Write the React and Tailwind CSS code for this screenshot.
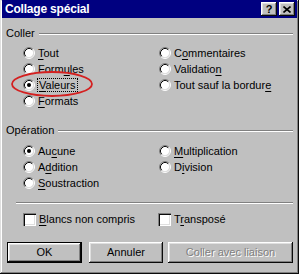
import React from 'react';

const font = { fontFamily: '"Liberation Sans", Arial, sans-serif' };

function Radio({ checked }) {
  return (
    <svg width="12" height="12" viewBox="0 0 12 12" className="shrink-0">
      <circle cx="6" cy="6" r="4.5" fill="#fff" />
      <path d="M2.11 9.89 A5.5 5.5 0 0 1 9.89 2.11" fill="none" stroke="#808080" />
      <path d="M9.89 2.11 A5.5 5.5 0 0 1 2.11 9.89" fill="none" stroke="#fff" />
      <path d="M2.82 9.18 A4.5 4.5 0 0 1 9.18 2.82" fill="none" stroke="#0a0a0a" />
      <path d="M9.18 2.82 A4.5 4.5 0 0 1 2.82 9.18" fill="none" stroke="#dfdfdf" />
      {checked && <circle cx="6" cy="6" r="2" fill="#000" />}
    </svg>
  );
}

// label with one underlined access key
function Label({ text, k }) {
  if (k < 0) return <span>{text}</span>;
  return (
    <span>
      {text.slice(0, k)}
      <span className="underline underline-offset-[2px]">{text[k]}</span>
      {text.slice(k + 1)}
    </span>
  );
}

function RadioRow({ text, k, checked, focus }) {
  return (
    <div className="flex items-center h-[16px]">
      <Radio checked={checked} />
      {focus ? (
        <span className="ml-[2px] px-[1px] h-[14px] flex items-center border border-dotted border-black">
          <Label text={text} k={k} />
        </span>
      ) : (
        <span className="ml-[3px]">
          <Label text={text} k={k} />
        </span>
      )}
    </div>
  );
}

function GroupHeader({ title }) {
  return (
    <div className="flex items-center h-[13px] pl-[4px] pr-[4px]">
      <span>{title}</span>
      <div className="flex-1 ml-[4px] h-[2px] border-t border-[#808080] border-b-white border-b" />
    </div>
  );
}

function CheckRow({ text, k }) {
  return (
    <div className="flex items-center h-[16px]">
      <span className="w-[13px] h-[13px] bg-white shrink-0 shadow-[inset_1px_1px_#808080,inset_2px_2px_#0a0a0a,inset_-1px_-1px_#fff,inset_-2px_-2px_#dfdfdf]" />
      <span className="ml-[3px]">
        <Label text={text} k={k} />
      </span>
    </div>
  );
}

const raised =
  'shadow-[inset_-1px_-1px_#0a0a0a,inset_1px_1px_#fff,inset_-2px_-2px_#808080,inset_2px_2px_#dfdfdf]';

export default function App() {
  return (
    <div
      style={font}
      className="relative w-[299px] h-[274px] bg-[#c0c0c0] text-[11px] text-black flex flex-col px-[2px] pb-[2px] shadow-[inset_-1px_-1px_#0a0a0a,inset_1px_1px_#dfdfdf,inset_-2px_-2px_#808080,inset_2px_2px_#fff]"
    >
      {/* title bar */}
      <div className="h-[18px] bg-[#000080] flex items-center justify-between pl-[3px] pr-[2px]">
        <span className="text-white font-bold text-[12px] tracking-[-0.2px]">Collage spécial</span>
        <div className="flex gap-[2px]">
          <div className={`w-[16px] h-[14px] bg-[#c0c0c0] flex items-center justify-center font-bold text-[11px] leading-none ${raised}`}>
            ?
          </div>
          <div className={`w-[16px] h-[14px] bg-[#c0c0c0] flex items-center justify-center ${raised}`}>
            <svg width="8" height="7" viewBox="0 0 8 7">
              <path d="M0.5 0.5 L7.5 6.5 M7.5 0.5 L0.5 6.5" stroke="#000" strokeWidth="1.6" />
            </svg>
          </div>
        </div>
      </div>

      <div className="mt-[9px]">
        <GroupHeader title="Coller" />
      </div>
      <div className="mt-[5px] grid grid-cols-[136px_1fr] pl-[21px]">
        <div className="flex flex-col">
          <RadioRow text="Tout" k={0} />
          <RadioRow text="Formules" k={4} />
          <RadioRow text="Valeurs" k={0} checked focus />
          <RadioRow text="Formats" k={0} />
        </div>
        <div className="flex flex-col">
          <RadioRow text="Commentaires" k={1} />
          <RadioRow text="Validation" k={9} />
          <RadioRow text="Tout sauf la bordure" k={19} />
        </div>
      </div>

      <div className="mt-[15px]">
        <GroupHeader title="Opération" />
      </div>
      <div className="mt-[6px] grid grid-cols-[136px_1fr] pl-[21px]">
        <div className="flex flex-col">
          <RadioRow text="Aucune" k={2} checked />
          <RadioRow text="Addition" k={1} />
          <RadioRow text="Soustraction" k={0} />
        </div>
        <div className="flex flex-col">
          <RadioRow text="Multiplication" k={0} />
          <RadioRow text="Division" k={1} />
        </div>
      </div>

      <div className="mt-[11px] ml-[14px] mr-[4px] h-[2px] border-t border-[#808080] border-b border-b-white" />

      <div className="mt-[7px] grid grid-cols-[135px_1fr] pl-[21px]">
        <CheckRow text="Blancs non compris" k={0} />
        <CheckRow text="Transposé" k={1} />
      </div>

      <div className="mt-[15px] flex pl-[5px]">
        <button className="w-[75px] h-[21px] border border-black bg-[#c0c0c0] shadow-[inset_-1px_-1px_#0a0a0a,inset_1px_1px_#fff,inset_-2px_-2px_#808080,inset_2px_2px_#dfdfdf]">
          OK
        </button>
        <button className={`ml-[7px] w-[74px] h-[21px] bg-[#c0c0c0] ${raised}`}>Annuler</button>
        <button className={`ml-[5px] w-[125px] h-[21px] bg-[#c0c0c0] text-[#808080] [text-shadow:1px_1px_#fff] ${raised}`}>
          Coller avec liaison
        </button>
      </div>

      {/* red annotation around Valeurs */}
      <svg className="absolute left-[10px] top-[70px] pointer-events-none" width="84" height="28" viewBox="0 0 84 28">
        <ellipse cx="42" cy="14" rx="40" ry="12" fill="none" stroke="#d42020" strokeWidth="1.8" />
      </svg>
    </div>
  );
}
